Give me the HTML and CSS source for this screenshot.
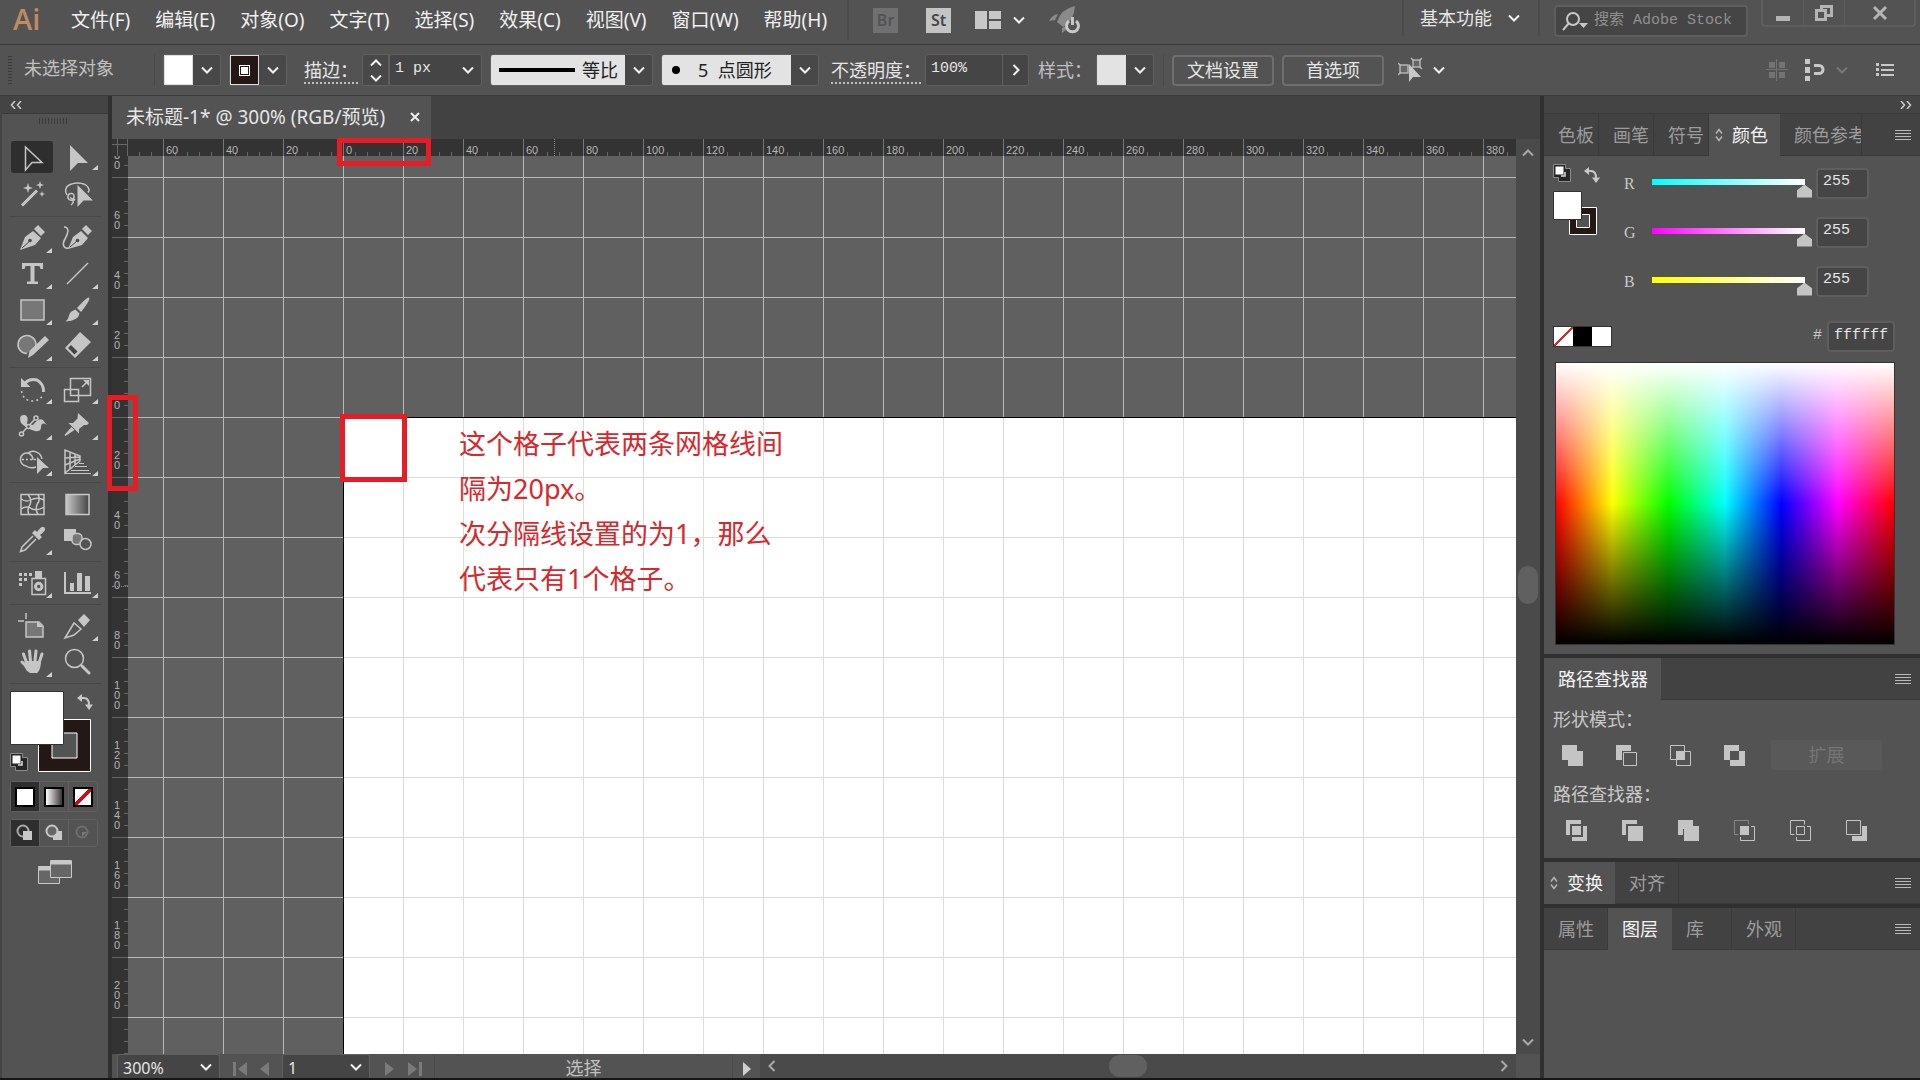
FILE: index.html
```html
<!DOCTYPE html>
<html lang="zh-CN">
<head>
    <meta charset="UTF-8">
    <meta name="viewport" content="width=device-width, initial-scale=1.0">
    <title>未标题-1*</title>
    <link rel="stylesheet" href="styles.css">
</head>
<body>
    <svg class="sprite" aria-hidden="true">
        <symbol id="chevron" viewBox="0 0 12 8"><path d="M1 1.5l5 5 5-5" fill="none" stroke="currentColor" stroke-width="2"/></symbol>
        <symbol id="chevron-right" viewBox="0 0 8 12"><path d="M1.5 1l5 5-5 5" fill="none" stroke="currentColor" stroke-width="2"/></symbol>
        <symbol id="lines" viewBox="0 0 16 12"><path d="M0 1.5h16M0 4.5h16M0 7.5h16M0 10.5h16" stroke="currentColor" stroke-width="1"/></symbol>
        <symbol id="updown" viewBox="0 0 8 14"><path d="M1 5.5l3-4 3 4M1 8.5l3 4 3-4" fill="none" stroke="currentColor" stroke-width="1.5"/></symbol>
        <symbol id="swap" viewBox="0 0 16 16"><path d="M4 4h3q5 0 5 7" fill="none" stroke="currentColor" stroke-width="2"/><path d="M0 4l5-4v8zM8 10.5h8L12 16z" fill="currentColor"/></symbol>
        <symbol id="default" viewBox="0 0 18 18"><path d="M.5.5h12v4h5v13h-12v-4h-5z" fill="#262626" stroke="#8c8c8c"/><path d="M8 12h4V8" fill="none" stroke="#ddd" stroke-width="1.5"/><rect x="2.5" y="2.5" width="8" height="8" fill="#fff"/></symbol>
    </svg>

    <!-- menu bar -->
    <header class="menubar">
        <span class="logo">Ai</span>
        <nav class="menu">
            <a href="#">文件(F)</a>
            <a href="#">编辑(E)</a>
            <a href="#">对象(O)</a>
            <a href="#">文字(T)</a>
            <a href="#">选择(S)</a>
            <a href="#">效果(C)</a>
            <a href="#">视图(V)</a>
            <a href="#">窗口(W)</a>
            <a href="#">帮助(H)</a>
        </nav>
        <div class="app-buttons">
            <button class="app-box dim">Br</button>
            <button class="app-box">St</button>
            <button class="layout-button" aria-label="排列文档">
                <svg width="26" height="18" fill="#c8c8c8"><path d="M0 0h12v18H0zM14 0h12v8H14zM14 10h12v8H14z"/></svg>
                <svg class="chev"><use href="#chevron"/></svg>
            </button>
            <button aria-label="GPU 性能">
                <svg width="32" height="28" viewBox="0 0 32 28"><path d="M26 0Q12 3 8 16l6 5Q25 15 26 0zM9 8q-6 1-9 7l6-1zM13 22v5l5-4 1-4z" fill="#8a8a8a"/><path d="M20 15a6 6 0 1 0 7 0" fill="none" stroke="#c8c8c8" stroke-width="3"/><path d="M23.5 11v8" stroke="#c8c8c8" stroke-width="3"/></svg>
            </button>
        </div>
        <div class="menubar-right">
            <button class="workspace-switch">基本功能 <svg class="chev"><use href="#chevron"/></svg></button>
            <label class="search">
                <svg width="26" height="20" viewBox="0 0 26 20" fill="none" stroke="#c8c8c8" stroke-width="2"><circle cx="11" cy="8" r="6"/><path d="M7 12l-6 7"/><path d="M17 12h9l-4.5 5z" fill="#c8c8c8" stroke="none"/></svg>
                <input type="text" placeholder="搜索 Adobe Stock" aria-label="搜索 Adobe Stock">
            </label>
        </div>
        <div class="window-buttons">
            <button aria-label="最小化"><svg width="16" height="18"><path d="M1 12h14v5H1z" fill="#b4b4b4"/></svg></button>
            <button aria-label="还原"><svg width="18" height="16" fill="none" stroke="#b4b4b4" stroke-width="3"><path d="M6.5 5V1.5h10v9H12"/><path d="M1.5 5.5h9v9h-9z"/></svg></button>
            <button class="wide" aria-label="关闭"><svg width="16" height="14"><path d="M2 1l12 12M14 1L2 13" stroke="#b4b4b4" stroke-width="3"/></svg></button>
        </div>
    </header>

    <!-- control bar -->
    <section class="controlbar">
        <span class="grip"></span>
        <span class="state">未选择对象</span>
        <div class="swatches">
            <button class="swatch-drop" aria-label="填色"><span class="swatch white"></span><svg class="chev"><use href="#chevron"/></svg></button>
            <button class="swatch-drop" aria-label="描边颜色"><span class="swatch stroke"></span><svg class="chev"><use href="#chevron"/></svg></button>
        </div>
        <label class="dotted" for="stroke-weight">描边<span class="colon">：</span></label>
        <div class="spinner">
            <button aria-label="增加"><svg class="chev up"><use href="#chevron"/></svg></button>
            <button aria-label="减少"><svg class="chev"><use href="#chevron"/></svg></button>
        </div>
        <div class="combo weight">
            <select id="stroke-weight"><option>1 px</option></select>
            <svg class="chev"><use href="#chevron"/></svg>
        </div>
        <div class="combo light profile">
            <span class="profile-line"></span>
            <select aria-label="变量宽度配置文件"><option>等比</option></select>
            <svg class="chev"><use href="#chevron"/></svg>
        </div>
        <div class="combo light brush">
            <span class="brush-dot"></span>
            <select aria-label="画笔定义"><option>5&nbsp; 点圆形</option></select>
            <svg class="chev"><use href="#chevron"/></svg>
        </div>
        <label class="dotted" for="opacity">不透明度<span class="colon">：</span></label>
        <div class="field-drop">
            <input id="opacity" type="text" value="100%">
            <button aria-label="不透明度滑块"><svg class="chev-r"><use href="#chevron-right"/></svg></button>
        </div>
        <span class="style-label">样式<span class="colon">：</span></span>
        <button class="swatch-drop" aria-label="样式"><span class="swatch grey"></span><svg class="chev"><use href="#chevron"/></svg></button>
        <div class="doc-buttons">
            <button>文档设置</button>
            <button>首选项</button>
        </div>
        <button class="icon-drop" aria-label="选择类似的对象">
            <svg width="26" height="26" viewBox="0 0 26 26"><path d="M15 3h7v7h-7zM2 8h8v8H2z" fill="#666" stroke="#b4b4b4" stroke-width="1.5"/><path d="M13 1l3 3M24 1l-3 3M13 12l2-2M24 12l-3-3M0 6l3 3M0 18l3-3" stroke="#b4b4b4" stroke-width="1.5"/><path d="M11 7v18l4-5h8z" fill="#c8c8c8"/></svg>
            <svg class="chev"><use href="#chevron"/></svg>
        </button>
        <div class="control-end">
            <svg width="22" height="22" fill="#737373"><path d="M3 3h6v6H3zM13 3h6v6h-6zM3 13h6v6H3zM13 13h6v6h-6zM10 0h1v22h-1zM0 10h22v1H0z"/></svg>
            <button class="icon-drop dimmed" aria-label="对齐像素">
                <svg width="23" height="22"><path d="M1 0h5v5H1zM1 8h5v6H1zM1 17h5v5H1z" fill="#c8c8c8"/><path d="M10 6.5h5a4 4 0 0 1 0 8h-5" fill="none" stroke="#c8c8c8" stroke-width="3"/></svg>
                <svg class="chev"><use href="#chevron"/></svg>
            </button>
            <button aria-label="控制栏菜单"><svg width="18" height="14" fill="#c8c8c8"><path d="M0 0h3v3H0zM0 5h3v3H0zM0 10h3v3H0zM5 1h13v2H5zM5 6h13v2H5zM5 11h13v2H5z"/></svg></button>
        </div>
    </section>

    <main class="workspace">
        <!-- tool panel -->
        <aside class="toolpanel">
            <div class="collapse"><svg width="12" height="8" fill="none" stroke="#ccc" stroke-width="1.5"><path d="M5 0L1.5 4 5 8M11 0L7.5 4 11 8"/></svg></div>
            <div class="tool-grip"></div>
            <div class="tools first">
                <button class="tool active" aria-label="选择工具"><svg viewBox="0 0 30 30"><path class="ln" d="M8.5 5L25 20.5H15L8.5 28z"/></svg></button>
                <button class="tool more" aria-label="直接选择工具"><svg viewBox="0 0 30 30"><path d="M7 3l18 18H15l-8 8z"/></svg></button>
                <button class="tool" aria-label="魔棒工具"><svg viewBox="0 0 30 30"><path class="ln thick" d="M5 25.5L20 10.5"/><path d="M11 3l1.2 3.8L16 8l-3.8 1.2L11 13l-1.2-3.8L6 8l3.8-1.2zM23 1l1 3 3 1-3 1-1 3-1-3-3-1 3-1zM25 11l.8 2.2L28 14l-2.2.8L25 17l-.8-2.2L22 14l2.2-.8z"/></svg></button>
                <button class="tool" aria-label="套索工具"><svg viewBox="0 0 30 30"><path class="ln" d="M4 15Q0 8 7 4.5q8-3 15 0 6 4 3 8M12 19c-2 3-8 1-7-3s7-3 6 1-4 1-3 0M9 19q3 3-1 6"/><path d="M14.5 5v22l6-6.5H30z"/></svg></button>
            </div>
            <div class="tools">
                <button class="tool more" aria-label="钢笔工具"><svg viewBox="0 0 30 30"><path d="M3 27l5-13 8-6 8 7-6 7zM17 6l4-4 7 7-4 4z"/><path class="cut" d="M5 25l8-7"/><circle class="hole" cx="13" cy="17.5" r="1.8"/></svg></button>
                <button class="tool" aria-label="曲率工具"><svg viewBox="0 0 30 30"><path d="M5 26l5-12 8-6 7 7-6 7zM19 6l4-4 6 6-4 4z"/><path class="cut" d="M7 24l7-6"/><circle class="hole" cx="14.5" cy="17.5" r="1.8"/><path class="ln" d="M1 4c6 0 4 7 1 12s-2 10 4 9"/></svg></button>
                <button class="tool more" aria-label="文字工具"><svg viewBox="0 0 30 30"><path d="M5 4h21v6h-2.5L22.5 7H17.5v15.5H21V25H10v-2.5h3.5V7H8.5L7.5 10H5z"/></svg></button>
                <button class="tool more" aria-label="直线段工具"><svg viewBox="0 0 30 30"><path class="ln" d="M4 25L25 4"/></svg></button>
                <button class="tool more" aria-label="矩形工具"><svg viewBox="0 0 30 30"><path class="ln filled" d="M4 5h23v20H4z"/></svg></button>
                <button class="tool more" aria-label="画笔工具"><svg viewBox="0 0 30 30"><path d="M26 2.5q2 2-8 14.5l-4-4Q24 1.5 26 2.5zM12.5 14.5l4 4q-1 7-14 8 3-2 3.5-6t6.5-6z"/></svg></button>
                <button class="tool more" aria-label="Shaper 工具"><svg viewBox="0 0 30 30"><path class="ln filled" d="M10 22.5a9 9 0 1 1 8.5-6"/><path d="M28 5l4 4-16 15-5 3 1.5-7z"/></svg></button>
                <button class="tool more" aria-label="橡皮擦工具"><svg viewBox="0 0 30 30"><path d="M17 1l11 10-16 16-10-10z"/><path d="M5 17l3-3 6.5 6.5-3 3z" fill="#444"/></svg></button>
            </div>
            <div class="tools">
                <button class="tool more" aria-label="旋转工具"><svg viewBox="0 0 30 30"><path class="ln thick" d="M8 9q5-5 12-3 7 4 6.5 12"/><path d="M4 4v9h9.5z"/><path class="ln" stroke-dasharray="2 3" d="M4.5 17q2 10 11 10 7 0 10.5-6"/></svg></button>
                <button class="tool more" aria-label="比例缩放工具"><svg viewBox="0 0 30 30"><path class="ln" d="M7.5 4.5h20v17h-20zM1.5 15.5h14v12h-14zM19 13l6-6"/><path d="M20 6h6v6z"/></svg></button>
                <button class="tool more" aria-label="宽度工具"><svg viewBox="0 0 30 30"><path d="M4 13Q1 4 8 5q4 1 2 9l6 1q6-8 10-5 2 3 4 5-6-4-6 3-1 4-6 3Q10 19 4 13z"/><path class="ln" d="M6 22L18 9"/><g class="ln node"><circle cx="4.5" cy="24" r="2"/><circle cx="11.5" cy="16.5" r="2"/><circle cx="19" cy="8" r="2"/></g></svg></button>
                <button class="tool more" aria-label="操控变形工具"><svg viewBox="0 0 30 30"><path d="M15 3l11 10-2 2h-3l-5 4v4.5L5.5 13h4.5l4.5-4.5zM8.5 17l3 3-9 6-1-1z"/></svg></button>
                <button class="tool more" aria-label="形状生成器工具"><svg viewBox="0 0 30 30"><path class="ln" d="M19 21q-6 2-10-1a6.500 6.500 0 1 1 2-13 9 9 0 0 1 14 6"/><path class="ln" d="M11 7q5 2 5 7"/><path class="ln" stroke-dasharray="2 2" d="M5 13.5h14"/><path d="M20 11l12 11h-6l-6 6z"/></svg></button>
                <button class="tool more" aria-label="透视网格工具"><svg viewBox="0 0 30 30"><path class="ln" d="M2 4v23l15-12V10zM2 12l15-1M2 19l15-6M7 6v17M12 8v11"/><path d="M16 17h5v1h-5zM12 20h12v1H12zM8 24h18v1H8zM2 27h26v1H2z"/></svg></button>
            </div>
            <div class="tools">
                <button class="tool" aria-label="网格工具"><svg viewBox="0 0 30 30"><path class="ln" d="M4 5.5h23v20H4zM11 5.5q5 6 1 12-2 4 0 8M21 5.5q3 5-1 10-2 5 1 10M4 10q6 4 12 0 6-2 11 1M4 20q6-4 11 0 6 2 12-2"/></svg></button>
                <button class="tool" aria-label="渐变工具"><svg viewBox="0 0 30 30"><defs><linearGradient id="tool-grad"><stop offset="0" stop-color="#c8c8c8"/><stop offset="1" stop-color="#444"/></linearGradient></defs><path d="M3 5.5h23v20H3z" fill="url(#tool-grad)" stroke="#c8c8c8" stroke-width="1.5"/></svg></button>
                <button class="tool more" aria-label="吸管工具"><svg viewBox="0 0 30 30"><path d="M15 8l3-3 2 2q5-7 7.500-4.500T23 10l2 2-3 3z"/><path class="ln" d="M16 11L5 22l-1.500 4.500L8 25l11-11"/></svg></button>
                <button class="tool" aria-label="混合工具"><svg viewBox="0 0 30 30"><path d="M1 4h12v12H1z"/><rect class="ln filled" x="9" y="8.5" width="10" height="11" rx="4"/><circle cx="22.5" cy="19" r="5.5" class="ln node"/></svg></button>
            </div>
            <div class="tools">
                <button class="tool more" aria-label="符号喷枪工具"><svg viewBox="0 0 30 30"><path d="M2 5h3v3H2zM7 5h3v3H7zM12 5h3v3h-3zM2 10h3v3H2zM7 10h3v3H7zM2 15h3v3H2zM18 3h7v7h-7z"/><path class="ln" d="M15 10.5h13.5v16H15z"/><circle class="ln thick" cx="21.7" cy="18.5" r="3.2"/></svg></button>
                <button class="tool more" aria-label="柱形图工具"><svg viewBox="0 0 30 30"><path d="M1 4h2v20h25v2H1zM7 15h4v8H7zM14 5h5v18h-5zM22 8h5v15h-5z"/></svg></button>
            </div>
            <div class="tools">
                <button class="tool" aria-label="画板工具"><svg viewBox="0 0 30 30"><path class="ln filled" d="M9 11h13l4 4v11H9z"/><path class="ln" d="M9 2v6M1 10h6"/><path d="M20 10v6h6z"/></svg></button>
                <button class="tool more" aria-label="切片工具"><svg viewBox="0 0 30 30"><path class="ln" d="M2 27L11 12l7 6-7 6z"/><path d="M15 9l6-6 6 6-6 7z"/></svg></button>
                <button class="tool more" aria-label="抓手工具"><svg viewBox="0 0 30 30"><path class="ln finger" d="M10 17L6.5 7M13.5 14L12.5 4M18 14l1-10M22 16l3-9M10 20l-5-5"/><path d="M8 14h15l1 2q-1 8-4 10h-7q-5-3-6-8z"/></svg></button>
                <button class="tool" aria-label="缩放工具"><svg viewBox="0 0 30 30"><circle class="ln" cx="11.5" cy="11.5" r="9"/><path class="ln finger" d="M19 19l7 7"/></svg></button>
            </div>
            <div class="fillstroke">
                <svg width="84" height="84" viewBox="0 0 84 84" role="img" aria-label="填色和描边">
                    <path d="M28.5 28.5h52v52h-52zM42 42v25h25V42z" fill="#231815" fill-rule="evenodd" stroke="#fff"/>
                    <path d="M.5.5h53v53H.5z" fill="#fff" stroke="#333"/>
                    <use href="#swap" x="67" y="3" width="16" height="16" color="#c8c8c8"/>
                    <use href="#default" x="0" y="62" width="18" height="18"/>
                </svg>
            </div>
            <div class="modes">
                <button class="on" aria-label="颜色"><span class="mode-chip"></span></button>
                <button aria-label="渐变"><span class="mode-chip gradient"></span></button>
                <button aria-label="无"><span class="mode-chip none"></span></button>
            </div>
            <div class="modes draw">
                <button class="on" aria-label="正常绘图"><svg width="18" height="18"><circle cx="7" cy="7" r="5.5" fill="none" stroke="#aaa" stroke-width="2"/><path d="M7 7h9v9H7z" fill="#c8c8c8"/></svg></button>
                <button aria-label="背面绘图"><svg width="18" height="18"><path d="M8 7h9v9H8z" fill="#c8c8c8"/><circle cx="7" cy="7" r="5.5" fill="#666" stroke="#c8c8c8" stroke-width="2"/></svg></button>
                <button aria-label="内部绘图"><svg width="18" height="18"><circle cx="8" cy="8" r="5.5" fill="none" stroke="#6e6e6e" stroke-width="2"/><path d="M8 8h5l-5 5z" fill="#777"/></svg></button>
            </div>
            <button class="screen-mode" aria-label="更改屏幕模式"><svg width="34" height="26" stroke="#c8c8c8" fill="#666"><path d="M.5 7.5h21v17H.5z"/><path d="M1 8h20v3H1z" fill="#c8c8c8"/><path d="M12.5 1.5h21v17h-21z"/><path d="M13 2h20v3H13z" fill="#c8c8c8"/></svg></button>
        </aside>

        <!-- document -->
        <section class="document">
            <div class="doc-tabs">
                <div class="doc-tab"><span>未标题-1* @ 300% (RGB/预览)</span><button aria-label="关闭文档"><svg width="10" height="10"><path d="M1 1l8 8M9 1L1 9" stroke="#eee" stroke-width="2"/></svg></button></div>
            </div>
            <div class="doc-body">
                <div class="ruler-corner"></div>
                <div class="ruler-top">
                    <span>60</span><span>40</span><span>20</span><span>0</span><span>20</span><span>40</span><span>60</span><span>80</span><span>100</span><span>120</span><span>140</span><span>160</span><span>180</span><span>200</span><span>220</span><span>240</span><span>260</span><span>280</span><span>300</span><span>320</span><span>340</span><span>360</span><span>380</span>
                    <i class="cursor-x"></i>
                </div>
                <div class="scroll-v">
                    <svg class="chev up"><use href="#chevron"/></svg>
                    <div class="thumb"></div>
                    <svg class="chev"><use href="#chevron"/></svg>
                </div>
                <div class="ruler-left">
                    <span><b>80</b></span><span><b>60</b></span><span><b>40</b></span><span><b>20</b></span><span><b>0</b></span><span><b>20</b></span><span><b>40</b></span><span><b>60</b></span><span><b>80</b></span><span><b>100</b></span><span><b>120</b></span><span><b>140</b></span><span><b>160</b></span><span><b>180</b></span><span><b>200</b></span>
                    <i class="cursor-y"></i>
                </div>
                <div class="canvas">
                    <div class="artboard">
                        <p class="note">这个格子代表两条网格线间<br>隔为20px。<br>次分隔线设置的为1，那么<br>代表只有1个格子。</p>
                    </div>
                </div>
                <div class="mark mark-top"></div>
                <div class="mark mark-left"></div>
                <div class="mark mark-cell"></div>
            </div>
            <footer class="statusbar">
                <div class="combo zoom">
                    <select aria-label="缩放"><option>300%</option></select>
                    <svg class="chev"><use href="#chevron"/></svg>
                </div>
                <div class="pager">
                    <button aria-label="首项"><svg width="14" height="14"><path d="M0 0h3v14H0zM14 0v14L5 7z"/></svg></button>
                    <button aria-label="上一项"><svg width="9" height="14"><path d="M9 0v14L0 7z"/></svg></button>
                </div>
                <div class="combo page">
                    <select aria-label="画板导航"><option>1</option></select>
                    <svg class="chev"><use href="#chevron"/></svg>
                </div>
                <div class="pager next">
                    <button aria-label="下一项"><svg width="9" height="14"><path d="M0 0v14l9-7z"/></svg></button>
                    <button aria-label="末项"><svg width="14" height="14"><path d="M11 0h3v14h-3zM0 0v14l9-7z"/></svg></button>
                </div>
                <span class="status-text">选择</span>
                <button class="status-more" aria-label="状态菜单"><svg width="8" height="14"><path d="M0 0v14l8-7z" fill="#d0d0d0"/></svg></button>
                <div class="scroll-h">
                    <svg class="chev-r back"><use href="#chevron-right"/></svg>
                    <div class="thumb"></div>
                    <svg class="chev-r"><use href="#chevron-right"/></svg>
                </div>
            </footer>
        </section>

        <!-- right dock -->
        <aside class="dock">
            <div class="collapse right"><svg width="12" height="8" fill="none" stroke="#ccc" stroke-width="1.5"><path d="M1 0l3.5 4L1 8M7 0l3.5 4L7 8"/></svg></div>

            <section class="panel">
                <div class="tabs">
                    <button>色板</button>
                    <button>画笔</button>
                    <button>符号</button>
                    <button class="on with-arrows"><svg class="updown"><use href="#updown"/></svg>颜色</button>
                    <button class="clipped">颜色参考</button>
                    <button class="panel-menu" aria-label="面板菜单"><svg><use href="#lines"/></svg></button>
                </div>
                <div class="color-body">
                    <div class="color-top">
                        <svg width="48" height="72" viewBox="0 0 48 72" role="img" aria-label="填色和描边">
                            <use href="#default" x="0" y="0" width="18" height="18"/>
                            <use href="#swap" x="31" y="3" width="16" height="16" color="#c8c8c8"/>
                            <path d="M16.5 43.5h27v27h-27zM23.5 50.5v13h13v-13z" fill="#231815" fill-rule="evenodd" stroke="#fff"/>
                            <path d="M.5 27.5h28v28H.5z" fill="#fff" stroke="#333"/>
                        </svg>
                        <div class="channels">
                            <div class="channel red"><label for="ch-r">R</label><input id="ch-r" type="range" min="0" max="255" value="255"><input type="text" value="255" aria-label="R"></div>
                            <div class="channel green"><label for="ch-g">G</label><input id="ch-g" type="range" min="0" max="255" value="255"><input type="text" value="255" aria-label="G"></div>
                            <div class="channel blue"><label for="ch-b">B</label><input id="ch-b" type="range" min="0" max="255" value="255"><input type="text" value="255" aria-label="B"></div>
                        </div>
                    </div>
                    <div class="hex-row">
                        <div class="quick"><button class="none" aria-label="无"></button><button class="black" aria-label="黑色"></button><button class="white" aria-label="白色"></button></div>
                        <label class="hex"># <input type="text" value="ffffff"></label>
                    </div>
                    <div class="spectrum"></div>
                </div>
            </section>

            <section class="panel">
                <div class="tabs">
                    <button class="on finder">路径查找器</button>
                    <button class="panel-menu" aria-label="面板菜单"><svg><use href="#lines"/></svg></button>
                </div>
                <div class="finder-body">
                    <h2>形状模式<span class="colon">：</span></h2>
                    <div class="shape-modes">
                        <button aria-label="联集"><svg viewBox="0 0 21 21"><path d="M0 0h15v6h6v15H6v-6H0z"/></svg></button>
                        <button aria-label="减去顶层"><svg viewBox="0 0 21 21"><path d="M0 0h15v6H6v9H0z"/><path class="o" d="M7.5 7.5h13v13h-13z"/></svg></button>
                        <button aria-label="交集"><svg viewBox="0 0 21 21"><path class="o" d="M.5.5h14v14H.5zM6.5 6.5h14v14h-14z"/><path d="M6 6h9v9H6z"/></svg></button>
                        <button aria-label="差集"><svg viewBox="0 0 21 21"><path fill-rule="evenodd" d="M0 0h15v6h6v15H6v-6H0zM6 6v9h9V6z"/></svg></button>
                        <button class="expand" disabled>扩展</button>
                    </div>
                    <h2>路径查找器<span class="colon">：</span></h2>
                    <div class="finders">
                        <button aria-label="分割"><svg viewBox="0 0 21 21"><path d="M0 0h15v4H4v11H0zM17 6h4v15H6v-4h11zM6 6h9v9H6z"/></svg></button>
                        <button aria-label="修边"><svg viewBox="0 0 21 21"><path d="M0 0h15v4H4v11H0zM6 6h15v15H6z"/></svg></button>
                        <button aria-label="合并"><svg viewBox="0 0 21 21"><path d="M0 0h15v6h6v15H6V9H5v6H0z"/></svg></button>
                        <button aria-label="裁剪"><svg viewBox="0 0 21 21"><path class="o faint" d="M4.5 14.5h-4V.5h14v4"/><path class="o" d="M17 6.5h3.5v14h-14V17"/><path d="M6 6h9v9H6z"/></svg></button>
                        <button aria-label="轮廓"><svg viewBox="0 0 21 21"><path class="o" d="M4.5 14.5h-4V.5h14v4M6.5 6.5h8v8h-8zM17 6.5h3.5v14h-14V17"/></svg></button>
                        <button aria-label="减去后方对象"><svg viewBox="0 0 21 21"><path class="o" d="M.5.5h14v14H.5z"/><path d="M16 6h5v15H6v-5h10z"/></svg></button>
                    </div>
                </div>
            </section>

            <section class="panel">
                <div class="tabs">
                    <button class="on with-arrows">
                        <svg class="updown"><use href="#updown"/></svg>变换</button>
                    <button class="align">对齐</button>
                    <button class="panel-menu" aria-label="面板菜单"><svg><use href="#lines"/></svg></button>
                </div>
            </section>

            <section class="panel fill">
                <div class="tabs wide">
                    <button>属性</button>
                    <button class="on">图层</button>
                    <button class="library">库</button>
                    <button>外观</button>
                    <button class="panel-menu" aria-label="面板菜单"><svg><use href="#lines"/></svg></button>
                </div>
            </section>
        </aside>
    </main>
</body>
</html>
```
FILE: styles.css
```css
* {
    box-sizing: border-box;
}
body {
    margin: 0;
    height: 100vh;
    display: flex;
    flex-direction: column;
    overflow: hidden;
    background-color: #535353;
    border-bottom: 2px solid #161616;
    color: #e6e6e6;
    font-family: "Noto Sans", "Noto Sans CJK SC", sans-serif;
    font-size: 18px;
    line-height: 24px;
}
button, input, select {
    margin: 0;
    padding: 0;
    border: none;
    outline: none;
    background: none;
    color: inherit;
    font: inherit;
}
button {
    display: flex;
    align-items: center;
    justify-content: center;
}
svg {
    display: block;
    flex: none;
}
.sprite {
    position: absolute;
    width: 0;
    height: 0;
}
.chev {
    width: 12px;
    height: 8px;
    color: #f0f0f0;
}
.chev.up {
    transform: rotate(180deg);
}
.chev-r {
    width: 8px;
    height: 12px;
    color: #f0f0f0;
}
.chev-r.back {
    transform: rotate(180deg);
}
/* the TC face centres the full-width colon in its box */
.colon {
    font-family: "Noto Sans CJK TC", sans-serif;
    line-height: 1;
}

/* menu bar */
.menubar {
    flex: none;
    height: 45px;
    display: flex;
    align-items: flex-start;
    border-bottom: 1px solid #3c3c3c;
}
.menubar > * {
    height: 40px;
}
.logo {
    width: 71px;
    padding-left: 13px;
    color: #bd8b64;
    font-family: "Open Sans", sans-serif;
    font-size: 29px;
    font-weight: 600;
    line-height: 38px;
}
.menu {
    display: flex;
    gap: 25px;
    font-size: 19px;
    line-height: 40px;
}
.menu a {
    color: #f0f0f0;
    text-decoration: none;
}
.app-buttons {
    display: flex;
    align-items: center;
    gap: 24px;
    margin-left: 20px;
    padding-left: 24px;
    border-left: 2px solid #4a4a4a;
}
.app-box {
    width: 25px;
    height: 25px;
    margin-right: 4px;
    background-color: #c4c4c4;
    color: #484848;
    font-size: 16px;
    font-weight: 600;
}
.app-box.dim {
    background-color: #707070;
    color: #535353;
}
.layout-button {
    gap: 12px;
    margin-left: -4px;
}
.menubar-right {
    display: flex;
    margin-left: auto;
}
.workspace-switch {
    gap: 16px;
    height: 36px;
    padding: 0 18px 0 16px;
    border: solid #4a4a4a;
    border-width: 0 2px;
}
.search {
    display: flex;
    align-items: center;
    gap: 6px;
    width: 194px;
    height: 32px;
    margin: 5px 13px 0 14px;
    padding-left: 6px;
    border: 2px solid #5e5e5e;
    border-radius: 4px;
    background-color: #454545;
}
.search input {
    width: 100%;
    min-width: 0;
    font-family: "Liberation Mono", "Noto Sans CJK SC", monospace;
    font-size: 15px;
}
.search input::placeholder {
    color: #909090;
    opacity: 1;
}
.menubar .window-buttons {
    display: flex;
    height: 27px;
    margin-right: 4px;
    border: 2px solid #5e5e5e;
    border-top: none;
    border-radius: 0 0 4px 4px;
}
.window-buttons button {
    width: 41px;
    border-right: 1px solid #5e5e5e;
}
.window-buttons .wide {
    width: 69px;
    border: none;
}

/* control bar */
.controlbar {
    flex: none;
    height: 51px;
    display: flex;
    align-items: center;
    border-bottom: 1px solid #3c3c3c;
    padding: 0 26px 0 8px;
}
.controlbar > * {
    flex: none;
}
.grip {
    width: 4px;
    height: 28px;
    background: repeating-linear-gradient(#3a3a3a 0 1px, transparent 1px 3px);
}
.state {
    width: 143px;
    height: 32px;
    padding-left: 12px;
    border-right: 1px solid #4a4a4a;
    color: #c0c0c0;
    line-height: 28px;
}
.swatches {
    display: flex;
    gap: 8px;
    margin: 0 17px 0 8px;
}
.swatch-drop {
    gap: 8px;
    width: 58px;
    height: 32px;
    justify-content: flex-start;
    border: 1px solid #606060;
    border-radius: 3px;
    background-color: #484848;
}
.swatch {
    width: 29px;
    height: 30px;
    border: 1px solid #ddd;
}
.swatch.white {
    background-color: #fff;
}
.swatch.grey {
    background-color: #e3e3e3;
}
.swatch.stroke {
    background: linear-gradient(#fff, #fff) center / 7px 7px no-repeat, linear-gradient(#231815, #231815) center / 9px 9px no-repeat, linear-gradient(#fff, #fff) center / 11px 11px no-repeat #231815;
}
.dotted {
    height: 28px;
    line-height: 28px;
    border-bottom: 2px dotted #c0c0c0;
    white-space: nowrap;
}
.spinner {
    display: flex;
    flex-direction: column;
    width: 27px;
    height: 32px;
    margin-left: 4px;
    border: 1px solid #606060;
    border-radius: 3px 0 0 3px;
    background-color: #484848;
}
.spinner button {
    flex: 1;
}
.combo {
    display: grid;
    grid-template-columns: 1fr 27px;
    align-items: center;
    height: 32px;
    border: 1px solid #606060;
    border-radius: 3px;
    background-color: #454545;
}
.combo select {
    grid-area: 1 / 1 / 2 / 3;
    width: 100%;
    height: 100%;
    padding-left: 5px;
    appearance: none;
}
.combo .chev {
    grid-area: 1 / 2;
    justify-self: center;
    pointer-events: none;
}
.weight {
    width: 93px;
}
.weight select, .field-drop input, .channel input, .hex {
    font-family: "Liberation Mono", monospace;
    font-size: 15px;
}
.weight select, .field-drop input {
    padding-bottom: 3px;
}
.combo.light {
    background: linear-gradient(to left, #484848 27px, #e3e3e3 27px);
    color: #222;
}
.profile {
    width: 163px;
    margin-left: 8px;
}
.combo.profile select {
    padding-left: 91px;
}
.profile-line {
    grid-area: 1 / 1;
    width: 76px;
    height: 4px;
    margin-left: 8px;
    background-color: #000;
}
.brush {
    width: 158px;
    margin: 0 12px 0 8px;
}
.combo.brush select {
    padding-left: 36px;
}
.brush-dot {
    grid-area: 1 / 1;
    width: 8px;
    height: 8px;
    margin-left: 10px;
    border-radius: 50%;
    background-color: #000;
}
.field-drop {
    display: flex;
    width: 104px;
    height: 32px;
    margin: 0 9px 0 4px;
    border: 1px solid #606060;
    border-radius: 3px;
    background-color: #454545;
}
.field-drop input {
    flex: 1;
    min-width: 0;
    padding-left: 5px;
}
.field-drop button {
    width: 26px;
    border-left: 1px solid #606060;
}
.style-label {
    width: 58px;
    white-space: nowrap;
    color: #c0c0c0;
}
.doc-buttons {
    display: flex;
    gap: 8px;
    margin: 0 14px 0 9px;
    padding-left: 8px;
    border-left: 1px solid #4a4a4a;
}
.doc-buttons button {
    width: 102px;
    height: 31px;
    border: 2px solid #6e6e6e;
    border-radius: 4px;
}
.icon-drop {
    gap: 9px;
}
.icon-drop.dimmed .chev {
    color: #777;
}
.controlbar .control-end {
    display: flex;
    align-items: center;
    margin-left: auto;
    gap: 16px;
}
.control-end button:last-child {
    margin-left: 12px;
}

/* tool panel */
.workspace {
    flex: 1;
    min-height: 0;
    display: grid;
    grid-template-columns: 112px 1fr 380px;
}
.toolpanel {
    min-height: 0;
    border-left: 2px solid #444;
    border-right: 4px solid #303030;
}
.collapse {
    height: 18px;
    padding: 5px 0 0 8px;
    background-color: #444;
    border-bottom: 1px solid #3a3a3a;
}
.tool-grip {
    width: 28px;
    height: 6px;
    margin: 4px 0 17px 37px;
    background: repeating-linear-gradient(to right, #3a3a3a 0 1px, transparent 1px 3px);
}
.tools {
    display: grid;
    grid-template-columns: 42px 42px;
    gap: 0 4px;
    margin: 0 7px;
    padding: 3px 2px;
    border-bottom: 1px solid #474747;
}
.tools.first {
    padding-top: 0;
}
.tool {
    position: relative;
    height: 36px;
}
.tool svg {
    width: 30px;
    height: 30px;
    overflow: visible;
    fill: #c6c6c6;
}
.tool.active {
    height: 32px;
    border-radius: 3px;
    background-color: #2e2e2e;
}
.tool.active + .tool {
    height: 32px;
    margin-bottom: 4px;
}
.tool.more::after {
    content: "";
    position: absolute;
    right: 1px;
    bottom: 3px;
    width: 6px;
    height: 5px;
    background-color: #d0d0d0;
    clip-path: polygon(100% 0, 100% 100%, 0 100%);
}
.tool .ln {
    fill: none;
    stroke: #c6c6c6;
    stroke-width: 1.5;
}
.tool .thick {
    stroke-width: 3;
}
.tool .finger {
    stroke-width: 3;
    stroke-linecap: round;
}
.tool .filled {
    fill: #777;
}
.tool .node {
    fill: #535353;
}
.tool .cut {
    stroke: #484848;
}
.tool .hole {
    fill: #484848;
}
.fillstroke {
    margin: 7px 0 0 8px;
}
.modes {
    display: flex;
    width: 88px;
    height: 31px;
    margin: 6px 0 0 8px;
    border: 1px solid #606060;
    border-radius: 3px;
}
.modes button {
    flex: 1;
    border-right: 1px solid #606060;
}
.modes button:last-child {
    border-right: none;
}
.modes .on {
    background-color: #2e2e2e;
}
.modes.draw {
    height: 28px;
    margin-top: 7px;
}
.mode-chip {
    width: 20px;
    height: 20px;
    border: 2px solid #000;
    background-color: #fff;
}
.mode-chip.gradient {
    background: linear-gradient(to right, #fff, #3a3533);
}
.mode-chip.none {
    background: linear-gradient(135deg, #fff 42%, #e60012 42% 58%, #fff 58%);
}
.screen-mode {
    margin: 12px 0 0 36px;
}

/* document */
.document {
    min-width: 0;
    min-height: 0;
    display: flex;
    flex-direction: column;
}
.doc-tabs {
    flex: none;
    height: 43px;
    background-color: #424242;
}
.doc-tab {
    display: flex;
    align-items: center;
    justify-content: space-between;
    width: 319px;
    height: 43px;
    padding: 0 11px 2px 14px;
    background-color: #535353;
    font-size: 19px;
    white-space: nowrap;
}
.doc-body {
    position: relative;
    flex: 1;
    min-height: 0;
    display: grid;
    grid-template-columns: 16px 1fr 24px;
    grid-template-rows: 17px 1fr;
}
.ruler-corner {
    background: linear-gradient(#666, #666) 0 5px / 100% 1px no-repeat, linear-gradient(#666, #666) 5px 0 / 1px 100% no-repeat #333;
    border-right: 1px solid #666;
}
.ruler-top, .ruler-left {
    position: relative;
    overflow: hidden;
    color: #b4b4b4;
    font-family: "Liberation Sans", sans-serif;
    font-size: 11px;
}
.ruler-top {
    display: flex;
    padding-left: 35px;
    background: repeating-linear-gradient(to right, #666 0 1px, transparent 1px 12px) 11px 13px / 100% 4px no-repeat #333;
}
.ruler-top span {
    flex: none;
    width: 60px;
    padding-left: 2px;
    border-left: 1px solid #777;
    line-height: 22px;
}
.ruler-left {
    display: flex;
    flex-direction: column;
    grid-area: 2 / 1;
    background: repeating-linear-gradient(#666 0 1px, transparent 1px 12px) 12px 9px / 4px 100% no-repeat #333;
}
.ruler-left span {
    flex: none;
    height: 60px;
    display: flex;
    flex-direction: column;
    justify-content: flex-end;
    padding: 0 0 7px 2px;
    border-bottom: 1px solid #666;
}
.ruler-left span:first-child {
    height: 22px;
}
.ruler-left b {
    width: 6px;
    font-weight: normal;
    line-height: 10px;
    word-break: break-all;
}
.cursor-x {
    position: absolute;
    left: 426px;
    height: 100%;
    border-left: 1px dotted #888;
}
.cursor-y {
    position: absolute;
    top: 430px;
    width: 100%;
    border-top: 1px dotted #888;
}
.canvas {
    grid-area: 2 / 2;
    display: flex;
    min-height: 0;
    overflow: hidden;
    padding: 261px 0 0 215px;
    background: linear-gradient(to right, #b8b8b8 1px, transparent 1px) 35px 21px / 60px 60px, linear-gradient(#b8b8b8 1px, transparent 1px) 35px 21px / 60px 60px #606060;
}
.artboard {
    flex: 1;
    border: solid #000;
    border-width: 1px 0 0 1px;
    background: linear-gradient(to right, #dcdcdc 1px, transparent 1px) -1px -1px / 60px 60px, linear-gradient(#dcdcdc 1px, transparent 1px) -1px -1px / 60px 60px #fff;
}
.note {
    margin: 3px 0 0 115px;
    color: #d7282c;
    font-size: 27px;
    line-height: 45px;
}
.mark {
    position: absolute;
    border: 5px solid #e81c24;
}
.mark-top {
    left: 225px;
    top: -1px;
    width: 94px;
    height: 28px;
}
.mark-left {
    left: -5px;
    top: 256px;
    width: 31px;
    height: 96px;
}
.mark-cell {
    left: 228px;
    top: 275px;
    width: 67px;
    height: 68px;
    background-color: #fff;
}
.scroll-v {
    grid-area: 1 / 3 / 3 / 4;
    display: flex;
    flex-direction: column;
    align-items: center;
    justify-content: space-between;
    padding: 10px 0 8px;
    background-color: #4a4a4a;
}
.scroll-v .chev, .scroll-h .chev-r {
    color: #a8a8a8;
}
.scroll-v .thumb {
    width: 20px;
    height: 38px;
    margin-bottom: 26px;
    border-radius: 10px;
    background-color: #606060;
}

/* status bar */
.statusbar {
    flex: none;
    height: 24px;
    display: flex;
    align-items: stretch;
    padding-left: 5px;
    font-size: 16px;
}
.statusbar .combo {
    height: 24px;
    border-bottom: none;
    border-radius: 3px 3px 0 0;
}
.statusbar .combo select {
    padding-top: 2px;
    line-height: 20px;
}
.zoom {
    width: 103px;
}
.page {
    width: 88px;
}
.pager {
    display: flex;
    align-items: center;
    justify-content: space-between;
    width: 62px;
    padding: 6px 13px 0;
    fill: #7a7a7a;
}
.pager.next {
    width: 64px;
    padding-left: 15px;
    padding-right: 12px;
}
.status-text {
    width: 299px;
    border: 1px solid #4a4a4a;
    border-width: 0 1px;
    color: #c0c0c0;
    line-height: 28px;
    font-size: 18px;
    text-align: center;
}
.status-more {
    width: 27px;
    padding-top: 6px;
}
.scroll-h {
    flex: 1;
    display: flex;
    align-items: center;
    justify-content: space-between;
    margin-right: 24px;
    padding: 0 8px;
    background-color: #4a4a4a;
}
.scroll-h .thumb {
    width: 38px;
    height: 22px;
    margin-right: 20px;
    border-radius: 11px;
    background-color: #606060;
}

/* right dock */
.dock {
    min-height: 0;
    display: flex;
    flex-direction: column;
    border-left: 4px solid #303030;
}
.collapse.right {
    display: flex;
    justify-content: flex-end;
    padding-right: 8px;
}
.panel {
    border-bottom: 4px solid #303030;
}
.panel.fill {
    flex: 1;
    border-bottom: none;
}
.tabs {
    display: flex;
    height: 42px;
    background-color: #424242;
    color: #9c9c9c;
}
.tabs button {
    flex: none;
    width: 55px;
    padding-left: 14px;
    justify-content: flex-start;
    border: solid #3a3a3a;
    border-width: 0 1px 1px 0;
    white-space: nowrap;
    overflow: hidden;
}
.tabs .on {
    border: none;
    background-color: #535353;
    color: #f4f4f4;
}
.tabs .with-arrows {
    width: 71px;
    padding-left: 6px;
    gap: 9px;
}
.tabs .clipped {
    width: 82px;
}
.tabs .finder {
    width: 117px;
}
.tabs .align {
    width: 64px;
}
.tabs.wide button {
    width: 64px;
}
.tabs.wide .library {
    width: 60px;
}
.updown {
    width: 8px;
    height: 14px;
    color: #b4b4b4;
}
.tabs .panel-menu, .tabs.wide .panel-menu {
    flex: 1;
    width: auto;
    justify-content: flex-end;
    padding: 0 9px 0 0;
    border-right: none;
}
.panel-menu svg {
    width: 16px;
    height: 12px;
    color: #b8b8b8;
}
.color-body {
    padding: 8px 25px 9px 9px;
}
.color-top {
    display: flex;
    gap: 23px;
}
.channels {
    flex: 1;
    display: flex;
    flex-direction: column;
    gap: 17px;
    padding: 3px 26px 0 0;
}
.channel {
    display: flex;
    align-items: center;
    height: 32px;
}
.channel label {
    width: 20px;
    padding-top: 2px;
    color: #c8c8c8;
    font-family: "Liberation Serif", serif;
    font-size: 16px;
}
.channel input[type="text"] {
    width: 53px;
    height: 31px;
    margin-left: 4px;
    padding: 0 0 4px 5px;
    border: 2px solid #5e5e5e;
    border-radius: 4px;
    background-color: #454545;
}
.channel input[type="range"] {
    flex: 1;
    min-width: 0;
    height: 20px;
    margin-top: 3px;
    appearance: none;
}
.channel input[type="range"]::-webkit-slider-runnable-track {
    height: 20px;
    background-repeat: no-repeat;
    background-position: 8px 4px;
    background-size: calc(100% - 15px) 6px;
}
.channel input[type="range"]::-webkit-slider-thumb {
    appearance: none;
    width: 15px;
    height: 13px;
    margin-top: 10px;
    background-color: #c4c4c4;
    clip-path: polygon(50% 0, 100% 45%, 100% 100%, 0 100%, 0 45%);
}
.red input::-webkit-slider-runnable-track {
    background-image: linear-gradient(to right, #0ff, #fff);
}
.green input::-webkit-slider-runnable-track {
    background-image: linear-gradient(to right, #f0f, #fff);
}
.blue input::-webkit-slider-runnable-track {
    background-image: linear-gradient(to right, #ff0, #fff);
}
.hex-row {
    display: flex;
    align-items: center;
    justify-content: space-between;
    height: 32px;
    margin: 23px 0 10px;
}
.quick {
    display: flex;
    border: 1px solid #333;
}
.quick button {
    width: 19px;
    height: 19px;
}
.quick .none {
    background: linear-gradient(135deg, #fff 47%, #d7282c 47% 53%, #fff 53%);
}
.quick .black {
    background-color: #000;
}
.quick .white {
    background-color: #fff;
}
.hex {
    display: flex;
    align-items: center;
    gap: 5px;
    color: #c8c8c8;
}
.hex input {
    width: 68px;
    height: 31px;
    padding: 0 0 2px 5px;
    border: 2px solid #5e5e5e;
    border-radius: 4px;
    background-color: #454545;
    color: #e6e6e6;
}
.spectrum {
    height: 283px;
    margin-left: 2px;
    border: 1px solid #333;
    background: linear-gradient(#fff, rgba(255, 255, 255, 0) 50%, rgba(0, 0, 0, 0) 50%, #000), linear-gradient(to right, #f00, #ff0, #0f0, #0ff, #00f, #f0f, #f00);
}
.finder-body {
    padding: 7px 30px 17px 9px;
}
.finder-body h2 {
    margin: 0;
    color: #c8c8c8;
    font-size: 18px;
    font-weight: normal;
    line-height: 24px;
}
.finder-body svg {
    width: 21px;
    height: 21px;
    fill: #c4c4c4;
}
.finder-body .o {
    fill: none;
    stroke: #c4c4c4;
}
.finder-body .faint {
    stroke: #858585;
}
.shape-modes {
    display: flex;
    align-items: center;
    gap: 33px;
    height: 30px;
    margin: 9px 0 12px 9px;
}
.expand {
    width: 111px;
    height: 30px;
    margin-left: -7px;
    border-radius: 3px;
    background-color: #595959;
    color: #757575;
}
.finders {
    display: flex;
    gap: 35px;
    padding: 14px 0 0 13px;
}
```
